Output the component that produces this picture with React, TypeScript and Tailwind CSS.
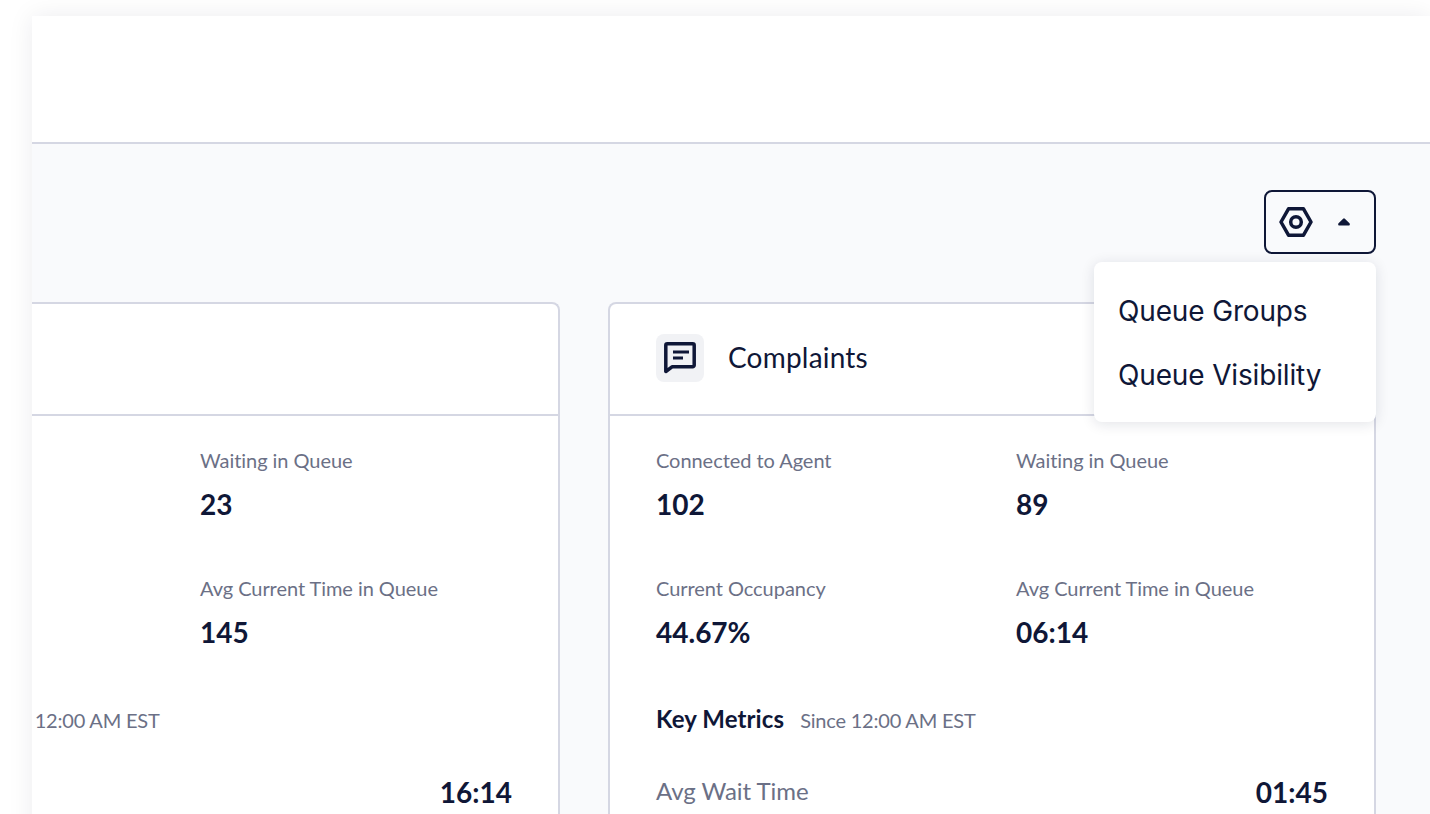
const navy = "text-[#0f1737]";

function ChatIcon() {
  return (
    <svg width="34" height="34" viewBox="0 0 34 34" fill="none" className={navy}>
      <path d="M2.800 4.300A1.500 1.500 0 0 1 4.300 2.800h25.400a1.500 1.500 0 0 1 1.500 1.500v20a1.500 1.500 0 0 1-1.500 1.500H9L2.800 30.500z" stroke="currentColor" strokeWidth="3.500" strokeLinejoin="round" />
      <path d="M10 11h16" stroke="currentColor" strokeWidth="3" />
      <path d="M10 17h10" stroke="currentColor" strokeWidth="3" />
    </svg>
  );
}

function GearIcon() {
  return (
    <svg width="34" height="30" viewBox="0 0 34 30" fill="none" className={navy}>
      <path d="M9.500 1.800h15L32 15l-7.500 13.200h-15L2 15z" stroke="currentColor" strokeWidth="3.500" strokeLinejoin="round" />
      <circle cx="17" cy="15" r="5.300" stroke="currentColor" strokeWidth="3.500" />
    </svg>
  );
}

function Caret() {
  return (
    <svg width="12" height="8" viewBox="0 0 14 9" className={navy}>
      <path d="M6 .6a1.400 1.400 0 0 1 2 0l5.400 5.400c.9.9.3 2.600-1 2.600H1.600c-1.300 0-1.900-1.700-1-2.600z" fill="currentColor" />
    </svg>
  );
}

function Stat({ label, value }: { label: string; value: string }) {
  return (
    <div className="h-[128px]">
      <div className="text-[20px] leading-[28px] tracking-[-0.05px] text-[#6b7086]">{label}</div>
      <div className="mt-[12px] text-[28px] leading-[36px] font-bold text-[#0f1737]">{value}</div>
    </div>
  );
}

type CardProps = {
  title: string;
  stats: { label: string; value: string }[];
  wait: string;
};

function QueueCard({ title, stats, wait }: CardProps) {
  return (
    <div className="w-[768px] h-[700px] shrink-0 bg-white border-2 border-b-0 border-[#d5d7e3] rounded-t-lg">
      <div className="h-[112px] flex items-start gap-6 pt-[30px] px-[46px] border-b-2 border-[#d5d7e3]">
        <div className="w-12 h-12 rounded-lg bg-[#f1f2f5] flex items-center justify-center">
          <ChatIcon />
        </div>
        <span className="text-[28px] leading-[47px] tracking-[0.2px] text-[#0f1737]">{title}</span>
      </div>
      <div className="px-[46px] pt-[30px]">
        <div className="grid grid-cols-[360px_1fr]">
          {stats.map((s) => (
            <Stat key={s.label} label={s.label} value={s.value} />
          ))}
        </div>
        <div className="mt-[1px] flex items-baseline gap-4">
          <span className="text-[24px] leading-[32px] tracking-[0.1px] font-bold text-[#0f1737]">Key Metrics</span>
          <span className="text-[20px] tracking-[-0.2px] text-[#6b7086]">Since 12:00 AM EST</span>
        </div>
        <div className="mt-[35px] flex items-center justify-between">
          <span className="pb-[2px] text-[24px] tracking-[-0.05px] text-[#6b7086]">Avg Wait Time</span>
          <span className="pt-[1px] text-[28px] font-bold text-[#0f1737]">{wait}</span>
        </div>
      </div>
    </div>
  );
}

export default function App() {
  return (
    <div className="h-[814px] w-[1430px] overflow-hidden bg-white font-['Lato',sans-serif]">
      <div className="ml-8 mt-4 h-[900px] bg-[#f9fafc] shadow-[0_0_24px_rgba(15,23,55,0.08)]">
        <div className="h-[128px] bg-white border-b-2 border-[#d5d7e3]" />
        <div className="relative h-[770px] overflow-hidden pt-[46px]">
          <div className="flex justify-end pr-[54px]">
            <button className="w-[112px] h-[64px] flex items-center gap-[25px] pl-[13px] rounded-lg border-2 border-[#0f1737]">
              <GearIcon />
              <Caret />
            </button>
          </div>
          <div className="absolute right-[54px] top-[118px] z-10 w-[282px] h-[160px] rounded-lg bg-white shadow-[0_2px_14px_rgba(15,23,55,0.12)] pl-6 pt-[18px] font-['Inter',sans-serif] text-[28px] leading-[63.5px] tracking-[-0.15px] text-[#0f1737]">
            <div>Queue Groups</div>
            <div>Queue Visibility</div>
          </div>
          <div className="mt-[48px] -ml-[240px] flex gap-12">
            <QueueCard
              title=""
              wait="16:14"
              stats={[
                { label: "", value: "" },
                { label: "Waiting in Queue", value: "23" },
                { label: " ", value: "" },
                { label: "Avg Current Time in Queue", value: "145" },
              ]}
            />
            <QueueCard
              title="Complaints"
              wait="01:45"
              stats={[
                { label: "Connected to Agent", value: "102" },
                { label: "Waiting in Queue", value: "89" },
                { label: "Current Occupancy", value: "44.67%" },
                { label: "Avg Current Time in Queue", value: "06:14" },
              ]}
            />
          </div>
        </div>
      </div>
    </div>
  );
}
